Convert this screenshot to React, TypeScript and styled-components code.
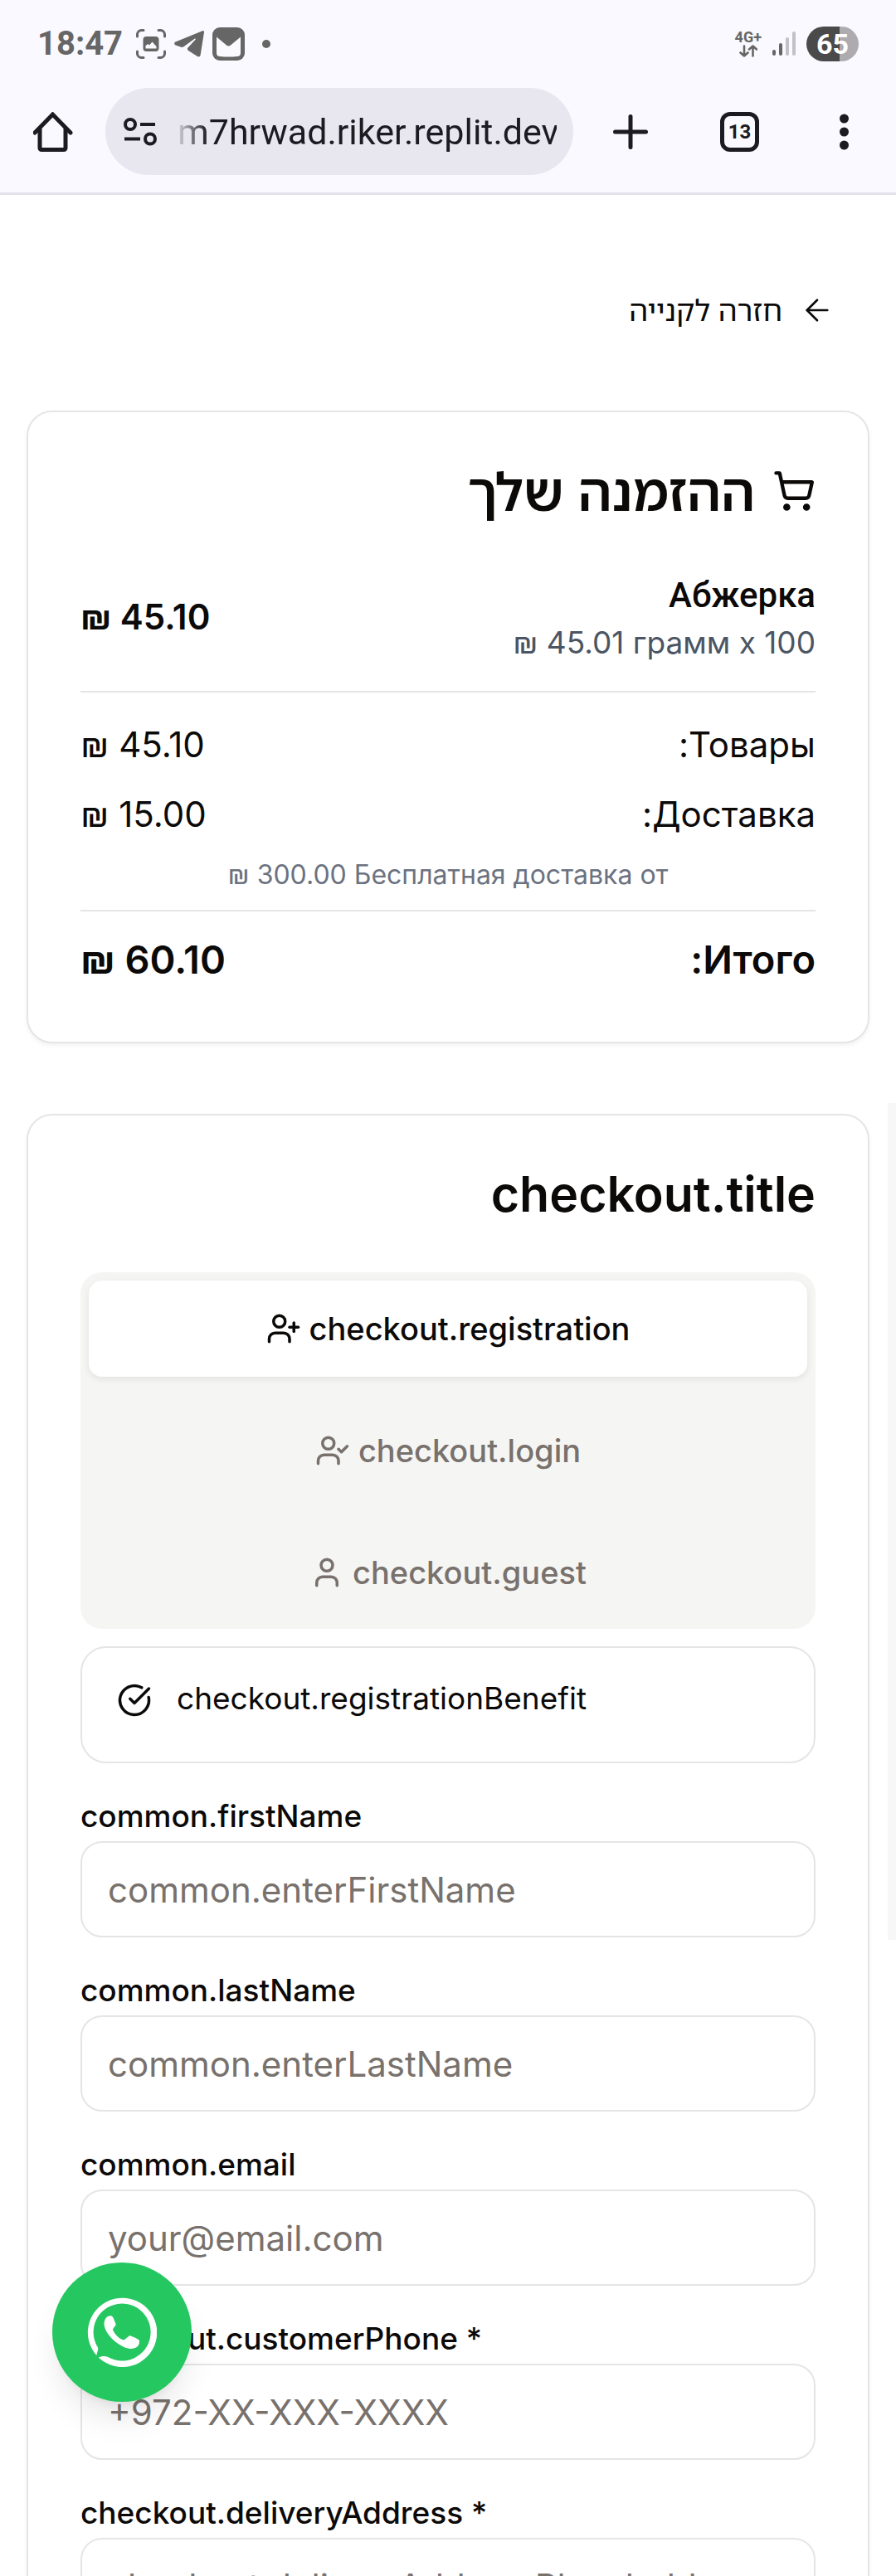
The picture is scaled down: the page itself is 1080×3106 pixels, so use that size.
import React from "react";
import styled, { createGlobalStyle, css } from "styled-components";
import { ArrowLeft, CircleCheckBig, ShoppingCart, User, UserCheck, UserPlus } from "lucide-react";

const sans = `Inter, Roboto, "Noto Sans", sans-serif`;
const hebrew = `"Noto Sans Hebrew", "Open Sans", "Noto Sans", sans-serif`;

const color = {
  ink: "#0c0a09",
  muted: "#78716c",
  line: "#e5e5e5",
  chrome: "#faf9ff",
  chromeInk: "#1b1b21",
  status: "#666666",
};

const GlobalStyle = createGlobalStyle`
  *, *::before, *::after { box-sizing: border-box; }
  body { margin: 0; background: #ffffff; color: ${color.ink}; font-family: ${sans}; }
  button, input { font: inherit; color: inherit; }
  button { border: 0; background: none; padding: 0; cursor: pointer; }
  h1, h2, p { margin: 0; }
  svg { display: block; flex: none; }
`;

const Screen = styled.div`
  display: flex;
  flex-direction: column;
  height: 100vh;
  overflow: hidden;
`;

/* ---------- phone chrome ---------- */

const Chrome = styled.header`
  flex: none;
  background: ${color.chrome};
  border-bottom: 3px solid #e3e1e9;
`;

const StatusBar = styled.div`
  display: flex;
  justify-content: space-between;
  align-items: center;
  height: 105px;
  padding: 0 45px;
  color: ${color.status};
`;

const StatusGroup = styled.div<{ $gap: number }>`
  display: flex;
  align-items: center;
  gap: ${(p) => p.$gap}px;
`;

const Clock = styled.time`
  margin-right: 6px;
  font-family: Roboto, sans-serif;
  font-size: 40px;
  font-weight: 700;
  line-height: 40px;
`;

const Dot = styled.span`
  width: 10px;
  height: 10px;
  margin-left: 11px;
  border-radius: 50%;
  background: currentColor;
`;

const Network = styled.div`
  display: flex;
  flex-direction: column;
  align-items: center;
  font-family: Roboto, sans-serif;
  font-size: 18px;
  font-weight: 700;
  line-height: 18px;
`;

const Battery = styled.span`
  display: flex;
  align-items: center;
  justify-content: center;
  width: 63px;
  height: 42px;
  border-radius: 21px;
  background: linear-gradient(to right, #4a4a4b 64%, #adabb0 64%);
  color: #ffffff;
  font-family: Roboto, sans-serif;
  font-size: 34px;
  font-weight: 700;
  line-height: 42px;
`;

const Toolbar = styled.div`
  display: flex;
  align-items: center;
  padding: 1px 47px 21px 40px;
  color: ${color.chromeInk};
`;

const AddressBar = styled.div`
  display: flex;
  flex: 1;
  min-width: 0;
  align-items: center;
  gap: 25px;
  height: 105px;
  margin: 0 48px 0 39px;
  padding: 0 20px 0 22px;
  border-radius: 53px;
  background: #e8e6ef;
`;

const Address = styled.input`
  flex: 1;
  min-width: 0;
  padding: 0;
  border: 0;
  outline: 0;
  background: none;
  font-family: Roboto, sans-serif;
  font-size: 43px;
  line-height: 60px;
  text-align: right;
  mask-image: linear-gradient(to right, rgba(0, 0, 0, 0.1), #000 36px);
`;

const Actions = styled.div`
  display: flex;
  align-items: center;
  gap: 87px;
`;

const TabCount = styled.button`
  width: 47px;
  height: 48px;
  border: 5px solid currentColor;
  border-radius: 12px;
  font-family: Roboto, sans-serif;
  font-size: 24px;
  font-weight: 700;
  line-height: 38px;
`;

/* ---------- page ---------- */

const Page = styled.main`
  position: relative;
  flex: 1;
  min-height: 0;
  padding: 86px 32px 0;
  overflow: hidden;
`;

const ScrollThumb = styled.div`
  position: absolute;
  top: 1095px;
  right: 0;
  width: 10px;
  height: 1009px;
  background: #f7f7f7;
`;

const BackLink = styled.a`
  display: flex;
  align-items: center;
  gap: 21px;
  width: fit-content;
  height: 105px;
  margin-bottom: 69px;
  padding: 0 42px;
  color: inherit;
  font-family: ${hebrew};
  font-size: 36px;
  line-height: 53px;
  text-decoration: none;
`;

const Card = styled.section`
  margin-bottom: 85px;
  padding: 63px;
  border: 2px solid ${color.line};
  border-radius: 31px;
  background: #ffffff;
  box-shadow: 0 3px 5px rgba(0, 0, 0, 0.05);
`;

const CardTitle = styled.h2<{ $hebrew?: boolean }>`
  display: flex;
  align-items: center;
  gap: 21px;
  margin-bottom: 63px;
  font-family: ${(p) => (p.$hebrew ? hebrew : sans)};
  font-size: ${(p) => (p.$hebrew ? 63 : 59)}px;
  font-weight: 600;
  line-height: 63px;
`;

const Row = styled.div<{ $strong?: boolean }>`
  display: flex;
  align-items: center;
  justify-content: space-between;
  font-size: 42px;
  line-height: 63px;
  ${(p) =>
    p.$strong &&
    css`
      padding-top: 21px;
      border-top: 2px solid ${color.line};
      font-size: 47px;
      font-weight: 600;
      line-height: 73px;
    `}
`;

const ItemRow = styled(Row)`
  padding-bottom: 32px;
  border-bottom: 2px solid ${color.line};
`;

const Totals = styled.div`
  display: flex;
  flex-direction: column;
  gap: 21px;
  padding-top: 31px;
`;

const ItemName = styled.p`
  font-family: Roboto, Inter, sans-serif;
  font-weight: 500;
  line-height: 63px;
`;

const ItemMeta = styled.p`
  color: #4b5563;
  font-size: 37px;
  line-height: 52px;
`;

const Amount = styled.span<{ $medium?: boolean }>`
  font-weight: ${(p) => (p.$medium ? 600 : "inherit")};
`;

const FreeShipping = styled.p`
  color: #6b7280;
  font-size: 32px;
  line-height: 42px;
  text-align: center;
`;

const TabList = styled.div`
  display: flex;
  flex-direction: column;
  gap: 31px;
  margin-bottom: 21px;
  padding: 10px;
  border-radius: 26px;
  background: #f5f5f4;
`;

const Tab = styled.button<{ $active?: boolean }>`
  display: flex;
  align-items: center;
  justify-content: center;
  gap: 10px;
  height: 116px;
  border-radius: 16px;
  color: ${color.muted};
  font-size: 38px;
  font-weight: 500;
  line-height: 52px;
  ${(p) =>
    p.$active &&
    css`
      background: #ffffff;
      color: ${color.ink};
      box-shadow: 0 3px 8px rgba(0, 0, 0, 0.08);
    `}
`;

const Form = styled.form`
  display: flex;
  flex-direction: column;
  gap: 45px;
`;

const Notice = styled.div`
  display: flex;
  gap: 30px;
  min-height: 141px;
  padding: 42px;
  border: 2px solid ${color.line};
  border-radius: 31px;
  font-size: 37px;
  line-height: 37px;
`;

const Field = styled.div`
  display: flex;
  flex-direction: column;
  gap: 12px;
`;

const Label = styled.label`
  font-size: 37px;
  font-weight: 500;
  line-height: 37px;
`;

const TextInput = styled.input`
  width: 100%;
  height: 116px;
  padding: 0 31px;
  border: 2px solid ${color.line};
  border-radius: 26px;
  background: #ffffff;
  font-size: 42px;
  &::placeholder {
    color: ${color.muted};
    opacity: 1;
  }
`;

const ChatButton = styled.a`
  position: fixed;
  bottom: 210px;
  left: 63px;
  display: flex;
  align-items: center;
  justify-content: center;
  width: 168px;
  height: 168px;
  border-radius: 50%;
  background: #25c760;
  color: #ffffff;
  box-shadow: 0 26px 39px -8px rgba(0, 0, 0, 0.1), 0 10px 16px -10px rgba(0, 0, 0, 0.1);
`;

/* ---------- drawings ---------- */

const CaptureIcon = () => (
  <svg width="36" height="36" viewBox="0 0 36 36" fill="none" stroke="currentColor" strokeWidth="3" strokeLinecap="round">
    <path d="M1.500 9V6.500a5 5 0 0 1 5-5H9M27 1.500h2.500a5 5 0 0 1 5 5V9M34.500 27v2.500a5 5 0 0 1-5 5H27M9 34.500H6.500a5 5 0 0 1-5-5V27" />
    <path fillRule="evenodd" stroke="none" fill="currentColor" d="M12.500 9h11a4 4 0 0 1 4 4v10a4 4 0 0 1-4 4h-11a4 4 0 0 1-4-4V13a4 4 0 0 1 4-4zM11.500 20v3.500h13V21l-5-5.500-3.500 4-1.500-1.500z" />
  </svg>
);

const TelegramIcon = () => (
  <svg width="36" height="33" viewBox="0 0 36 33" fill="currentColor">
    <path d="M34 1.200 1.500 14.500c-1.700.8-1.700 3.200.2 4l6.500 2.300c1.200.4 2.300.2 3.300-.5L24.500 10.800c1-.6 1.700.2 1 1L16.500 21.500c-1 1.200-.8 2.500.5 3.500l11 7c1.700 1 3.200.3 3.600-1.500L36 3C36.200 1.400 35.300.7 34 1.200z" />
  </svg>
);

const MailIcon = () => (
  <svg width="39" height="40" viewBox="0 0 39 40">
    <rect width="39" height="40" rx="9" fill="currentColor" />
    <path d="M5 11.500 17 21.500c1.600 1.200 3.400 1.200 5 0L34 11.500V31c0 2.500-1.500 4-4 4-7 .8-14 .8-21 0-2.500 0-4-1.500-4-4z" fill={color.chrome} />
  </svg>
);

const DataArrows = () => (
  <svg width="22" height="15" viewBox="0 0 22 15" fill="none" stroke="currentColor" strokeWidth="2.600" strokeLinecap="round" strokeLinejoin="round">
    <path d="M6 1.500v12M1.500 9.500l4.500 4 4.500-4M16.500 13.500v-12M12 5.500l4.500-4 4.500 4" />
  </svg>
);

const SignalIcon = () => (
  <svg width="28" height="31" viewBox="0 0 28 31" fill="currentColor">
    <rect y="23" width="4" height="7" rx="2" />
    <rect x="8" y="15" width="4" height="15" rx="2" />
    <rect x="16" y="8" width="4" height="22" rx="2" fill="#c2c1c7" />
    <rect x="24" y="1" width="4" height="29" rx="2" fill="#c2c1c7" />
  </svg>
);

const HomeIcon = () => (
  <svg width="48" height="48" viewBox="0 0 48 48" fill="none" stroke="currentColor" strokeWidth="5" strokeLinejoin="round">
    <path d="M2 25 23.500 3 45 25" strokeLinecap="round" strokeLinejoin="miter" />
    <path d="M8 20v23.500a2 2 0 0 0 2 2h27a2 2 0 0 0 2-2V20" />
  </svg>
);

const SiteInfoIcon = () => (
  <svg width="40" height="34" viewBox="0 0 40 34" fill="none" stroke="currentColor" strokeWidth="4">
    <circle cx="8" cy="8" r="6" />
    <path d="M20 8h18M1 25.500h19" />
    <circle cx="32" cy="25.500" r="6" />
  </svg>
);

const PlusIcon = () => (
  <svg width="42" height="42" viewBox="0 0 42 42" stroke="currentColor" strokeWidth="5" strokeLinecap="round">
    <path d="M21 2.500v37M2.500 21h37" />
  </svg>
);

const MoreIcon = () => (
  <svg width="31" height="44" viewBox="0 0 31 44" fill="currentColor">
    <circle cx="15.500" cy="6" r="5.500" />
    <circle cx="15.500" cy="22" r="5.500" />
    <circle cx="15.500" cy="38" r="5.500" />
  </svg>
);

const WhatsAppIcon = () => (
  <svg width="84" height="84" viewBox="0 0 84 84" fill="currentColor">
    <path d="M11.300 70A41.700 41.700 0 1 1 13.700 72.500C17 71 21 70.300 24.700 71.800A34.500 34.500 0 1 0 11.800 58.500C13.800 61 13.500 62.500 12.600 65Z" />
    <path d="M20.600 33.500C20 27 23.500 22.300 28 22.300C31 22.300 31.500 24.500 34.700 32.500C34.700 34.500 31 37 31 39C33 44 38 49.500 43.500 51.500C46 51.500 49.500 46.500 51.500 46.300C54 47 60 49.500 62.700 51.500C63.500 54 62.500 57.500 61 59C57 62.500 52 62.500 48 61.300C35 57 22 44 20.600 33.500Z" />
  </svg>
);

/* ---------- content ---------- */

const tabs = [
  { id: "registration", label: "checkout.registration", Icon: UserPlus },
  { id: "login", label: "checkout.login", Icon: UserCheck },
  { id: "guest", label: "checkout.guest", Icon: User },
];

const fields = [
  { id: "firstName", type: "text", label: "common.firstName", placeholder: "common.enterFirstName" },
  { id: "lastName", type: "text", label: "common.lastName", placeholder: "common.enterLastName" },
  { id: "email", type: "email", label: "common.email", placeholder: "your@email.com" },
  { id: "phone", type: "tel", label: "checkout.customerPhone *", placeholder: "+972-XX-XXX-XXXX" },
  { id: "address", type: "text", label: "checkout.deliveryAddress *", placeholder: "checkout.deliveryAddressPlaceholder" },
];

function BrowserChrome() {
  return (
    <Chrome>
      <StatusBar>
        <StatusGroup $gap={10}>
          <Clock>18:47</Clock>
          <CaptureIcon />
          <TelegramIcon />
          <MailIcon />
          <Dot />
        </StatusGroup>
        <StatusGroup $gap={13}>
          <Network>
            4G+
            <DataArrows />
          </Network>
          <SignalIcon />
          <Battery>65</Battery>
        </StatusGroup>
      </StatusBar>
      <Toolbar>
        <button type="button" aria-label="Home">
          <HomeIcon />
        </button>
        <AddressBar>
          <SiteInfoIcon />
          <Address aria-label="Address" readOnly value="m7hrwad.riker.replit.dev" />
        </AddressBar>
        <Actions>
          <button type="button" aria-label="New tab">
            <PlusIcon />
          </button>
          <TabCount type="button">13</TabCount>
          <button type="button" aria-label="More">
            <MoreIcon />
          </button>
        </Actions>
      </Toolbar>
    </Chrome>
  );
}

function OrderSummary() {
  return (
    <Card>
      <CardTitle $hebrew>
        <ShoppingCart size={52} strokeWidth={2} />
        ההזמנה שלך
      </CardTitle>
      <ItemRow>
        <div>
          <ItemName>Абжерка</ItemName>
          <ItemMeta dir="ltr">₪ 45.01 грамм x 100</ItemMeta>
        </div>
        <Amount $medium dir="ltr">₪ 45.10</Amount>
      </ItemRow>
      <Totals>
        <Row>
          <span>Товары:</span>
          <Amount dir="ltr">₪ 45.10</Amount>
        </Row>
        <Row>
          <span>Доставка:</span>
          <Amount dir="ltr">₪ 15.00</Amount>
        </Row>
        <FreeShipping dir="ltr">₪ 300.00 Бесплатная доставка от</FreeShipping>
        <Row $strong>
          <span>Итого:</span>
          <Amount dir="ltr">₪ 60.10</Amount>
        </Row>
      </Totals>
    </Card>
  );
}

function Checkout() {
  const [active, setActive] = React.useState("registration");
  return (
    <Card>
      <CardTitle>checkout.title</CardTitle>
      <TabList role="tablist" dir="ltr">
        {tabs.map(({ id, label, Icon }) => (
          <Tab key={id} type="button" role="tab" aria-selected={id === active} $active={id === active} onClick={() => setActive(id)}>
            <Icon size={42} strokeWidth={2} />
            {label}
          </Tab>
        ))}
      </TabList>
      <Form dir="ltr">
        <Notice>
          <CircleCheckBig size={42} strokeWidth={2} />
          <p>checkout.registrationBenefit</p>
        </Notice>
        {fields.map((f) => (
          <Field key={f.id}>
            <Label htmlFor={f.id}>{f.label}</Label>
            <TextInput id={f.id} type={f.type} placeholder={f.placeholder} />
          </Field>
        ))}
      </Form>
    </Card>
  );
}

export default function App() {
  return (
    <Screen>
      <GlobalStyle />
      <BrowserChrome />
      <Page dir="rtl">
        <BackLink href="#shop">
          <ArrowLeft size={42} strokeWidth={1.5} />
          חזרה לקנייה
        </BackLink>
        <OrderSummary />
        <Checkout />
        <ScrollThumb />
      </Page>
      <ChatButton href="#whatsapp" aria-label="WhatsApp">
        <WhatsAppIcon />
      </ChatButton>
    </Screen>
  );
}
